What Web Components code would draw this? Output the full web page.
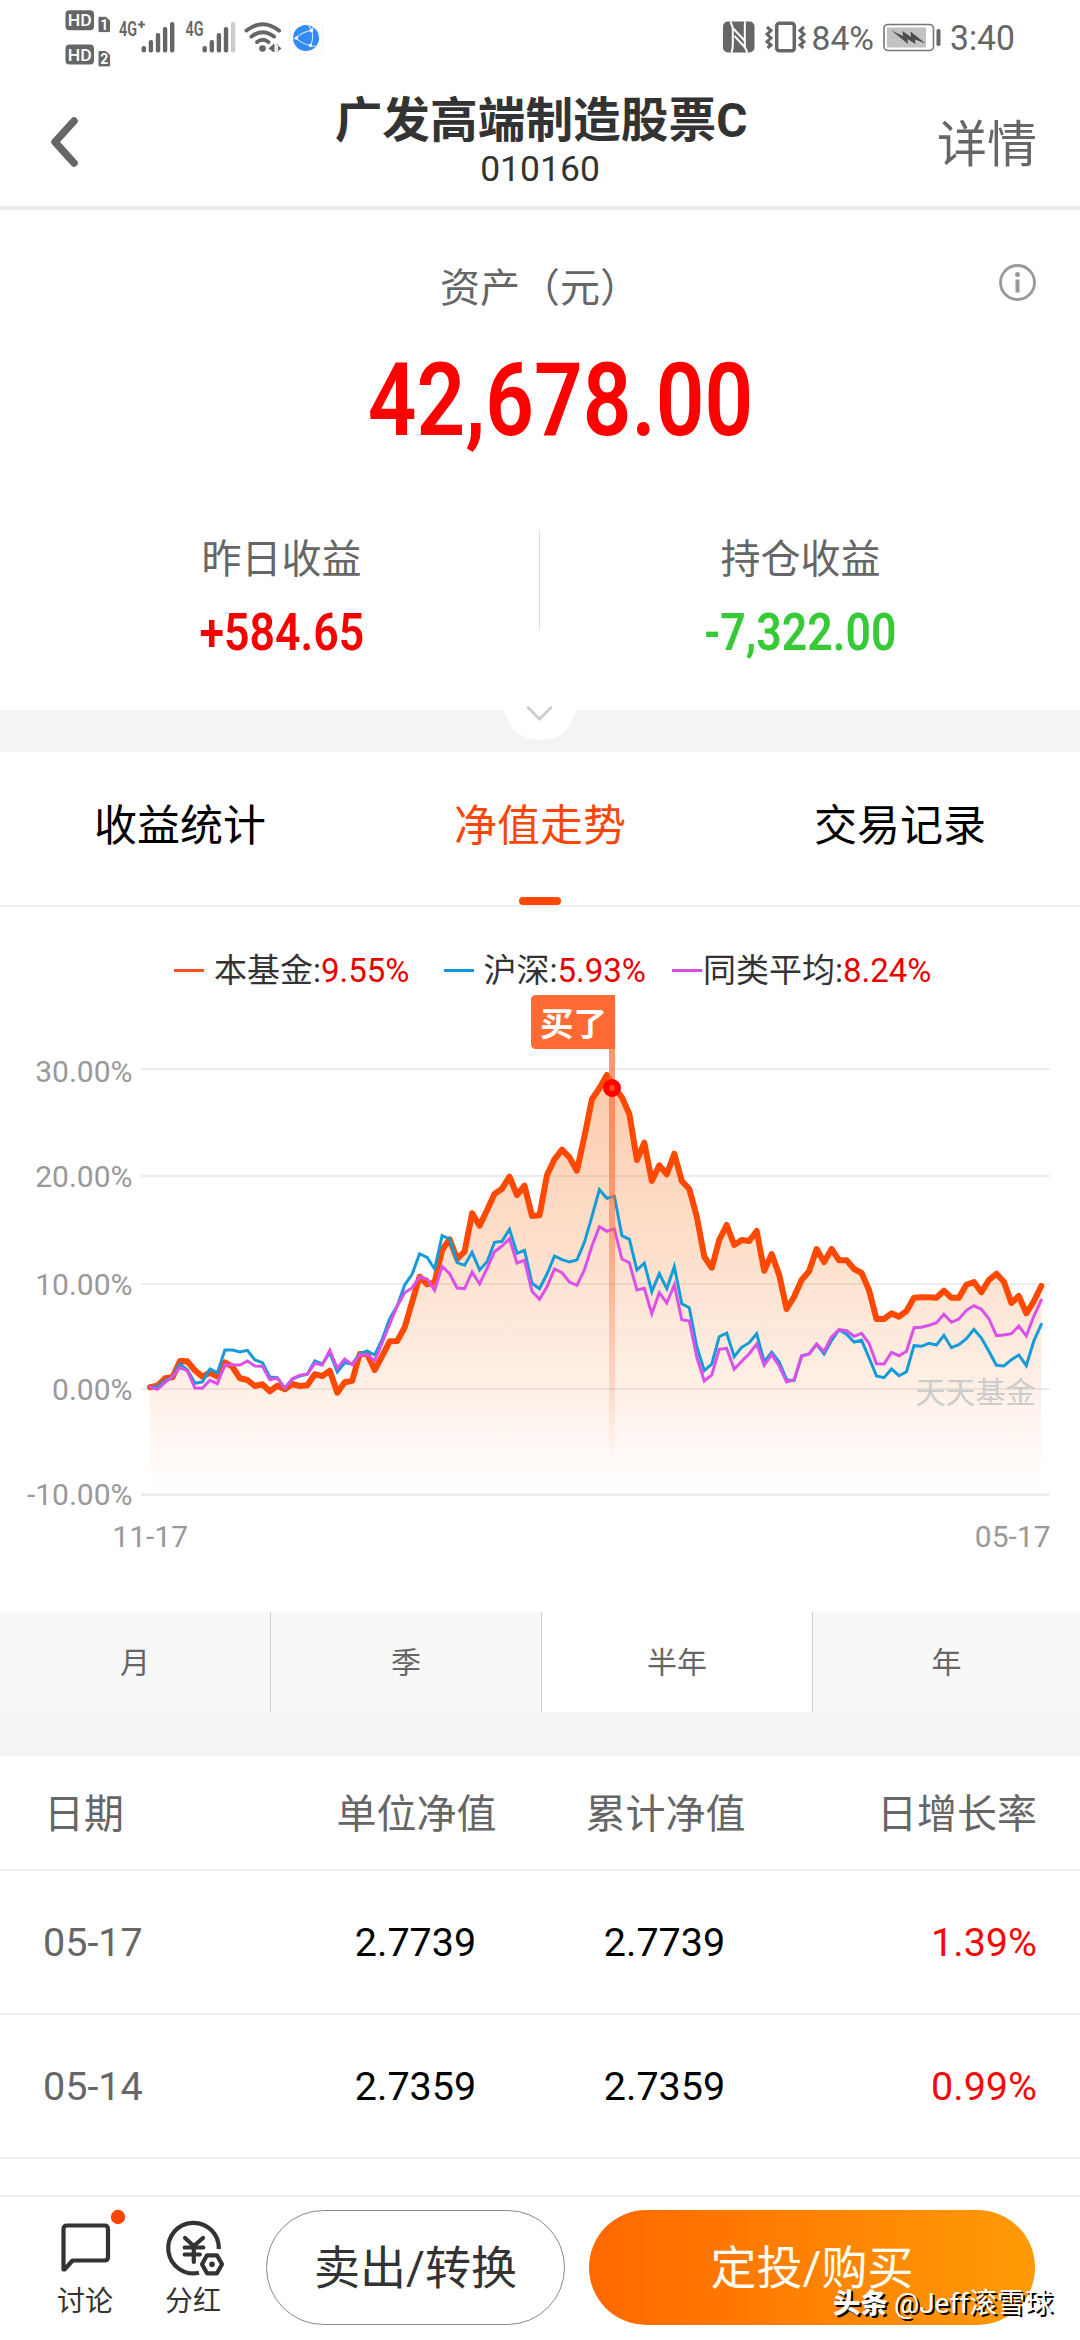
<!DOCTYPE html>
<html lang="zh-CN">
<head>
<meta charset="utf-8">
<title>广发高端制造股票C</title>
<style>
html,body{margin:0;padding:0;background:#fff}
body{width:1080px;height:2340px;overflow:hidden;font-family:Roboto,"Noto Sans CJK SC",sans-serif;color:#333}
fund-page{--grey:#666;--up:#f40808;--accent:#ff4a00}
</style>
</head>
<body>
<fund-page>
  <status-bar battery="84%" time="3:40"></status-bar>
  <page-header action="详情">广发高端制造股票C<span slot="code">010160</span></page-header>
  <asset-summary label="资产（元）" amount="42,678.00">
    <profit-cell label="昨日收益" shift="11" sx="0.85">+584.65</profit-cell>
    <profit-cell label="持仓收益" shift="-10" sx="0.85" down>-7,322.00</profit-cell>
  </asset-summary>
  <section-band h="42" toggle></section-band>
  <tab-bar>
    <tab-item>收益统计</tab-item>
    <tab-item active>净值走势</tab-item>
    <tab-item>交易记录</tab-item>
  </tab-bar>
  <chart-legend>
    <legend-item color="#f4511e" value="9.55%" gap="10" style="margin-left:174px">本基金:</legend-item>
    <legend-item color="#1296db" value="5.93%" gap="10" style="margin-left:34px">沪深:</legend-item>
    <legend-item color="#d94fe6" value="8.24%" gap="1" style="margin-left:26px">同类平均:</legend-item>
  </chart-legend>
  <trend-chart></trend-chart>
  <period-picker>
    <period-item>月</period-item>
    <period-item>季</period-item>
    <period-item active>半年</period-item>
    <period-item>年</period-item>
  </period-picker>
  <section-band h="44"></section-band>
  <nav-row head><span>日期</span><span slot="unit">单位净值</span><span slot="total">累计净值</span><span slot="rate">日增长率</span></nav-row>
  <nav-row><span>05-17</span><span slot="unit">2.7739</span><span slot="total">2.7739</span><span slot="rate">1.39%</span></nav-row>
  <nav-row><span>05-14</span><span slot="unit">2.7359</span><span slot="total">2.7359</span><span slot="rate">0.99%</span></nav-row>
  <action-bar></action-bar>
</fund-page>
<script>
const define=(name,render)=>customElements.define(name,class extends HTMLElement{
  connectedCallback(){
    if(this.shadowRoot)return;
    const root=this.attachShadow({mode:'open'});
    const t=document.createElement('template');
    t.innerHTML=render(this);
    root.append(t.content.cloneNode(true));
  }
});
const at=(el,n,d='')=>el.getAttribute(n)??d;

define('fund-page',()=>`<style>:host{display:flex;flex-direction:column;width:1080px;height:2340px;background:#fff}</style><slot></slot>`);

const bars=(x,weak)=>[46,40,33,27,22].map((y,i)=>`<rect x="${x+i*7.1}" y="${y}" width="4.4" height="${52.5-y}" rx="2" fill="${weak&&i===4?'#ccc':'#666'}"/>`).join('');
const hd=(y,n)=>`<rect x="65.5" y="${y}" width="28.5" height="20" rx="4" fill="#666"/>
<text x="79.8" y="${y+16}" text-anchor="middle" font-size="17" font-weight="500" fill="#fff" textLength="24" lengthAdjust="spacingAndGlyphs">HD</text>
<path d="M99 ${y+7}h7l3.5 3.5v10.8h-10.5z" fill="#666" stroke="#666" stroke-width="1" stroke-linejoin="round"/>
<text x="104.3" y="${y+19.5}" text-anchor="middle" font-size="14" font-weight="700" fill="#fff">${n}</text>`;
define('status-bar',el=>`<style>
:host{display:flex;height:80px;flex:none;color:#666}
svg{display:block;font-family:Roboto,sans-serif}
</style>
<svg width="1080" height="80" viewBox="0 0 1080 80">
${hd(10.3,1)}${hd(44.6,2)}
<g fill="#666" font-weight="600">
<text x="119" y="36" font-size="20.5" textLength="18" lengthAdjust="spacingAndGlyphs">4G</text>
<path d="M138 24.5h7M141.5 21v7" stroke="#666" stroke-width="2.2"/>
<text x="185.5" y="36" font-size="20.5" textLength="18" lengthAdjust="spacingAndGlyphs">4G</text>
</g>
${bars(141.6)}${bars(202.5,true)}
<g fill="none" stroke="#666" stroke-width="4" stroke-linecap="round">
<path d="M246.5 30.5q16-12.500 32.500 0"/><path d="M251.500 36.500q11-8.500 22.500 0"/><path d="M257 42q5.800-4.400 11.500 0"/></g>
<circle cx="262.500" cy="48.500" r="3.300" fill="#666"/>
<path d="M268.500 48.500l4.800-4.500v8zM281.500 48.500l-4.800-4.500v8zM273 44h1.500v8h-1.500zM276.500 44h1.500v8h-1.500z" fill="#666"/>
<rect x="289.500" y="21.500" width="33" height="33" rx="6" fill="#fff" stroke="#f3f3f3"/>
<circle cx="306" cy="38" r="13" fill="#348bf6"/>
<path d="M296 38q5.500-5.500 15.500-8M296 38q5 5.500 14.500 7.500M311.500 30q2.800 7-1 16M311.500 30l-3-5M293.500 39l2.500-1M310.500 46l7 .5M311.500 30l2-3" fill="none" stroke="#d5e8ff" stroke-width="1.100"/>
<circle cx="296.500" cy="38" r="1.700" fill="#fff"/><circle cx="311.500" cy="30.500" r="1.700" fill="#fff"/><circle cx="310.500" cy="45.500" r="1.700" fill="#fff"/>
<rect x="723" y="21.500" width="31.500" height="31" rx="5" fill="#666"/>
<path d="M730.500 21.500L732.800 28V45Q732.800 49 731.500 52.500M732.800 28L744.500 40.500M734.500 36L745.500 48M745 21.500Q744.800 24 744.800 29V47L747.300 52.500" fill="none" stroke="#fff" stroke-width="2"/>
<rect x="776.700" y="23.200" width="17.600" height="27.500" rx="2.500" fill="none" stroke="#666" stroke-width="3.500"/>
<path d="M767 27l4 3.500-4 3.800 4 3.700-4 3.700 4 3.300-3.500 3M804 27l-4 3.500 4 3.800-4 3.700 4 3.700-4 3.300 3.500 3" fill="none" stroke="#666" stroke-width="3"/>
<text x="811.500" y="50" font-size="34" fill="#666" textLength="62.500" lengthAdjust="spacingAndGlyphs">${at(el,'battery')}</text>
<rect x="884" y="24.500" width="49.500" height="26" rx="4" fill="#fff" stroke="#777" stroke-width="1.600"/>
<rect x="887" y="27.500" width="39" height="20" fill="#c2c2c2"/>
<path d="M891.500 30.500l11.500 5.500-.500-5 8.500 6-.500-5.500 15 12-10.500-4 .500 4.500-8-5 .5 5z" fill="#4d4d4d"/>
<rect x="936.500" y="29" width="4" height="17" rx="1.800" fill="#666"/>
<text x="950" y="50" font-size="35" fill="#666" textLength="65" lengthAdjust="spacingAndGlyphs">${at(el,'time')}</text>
</svg>`);

define('page-header',el=>`<style>
:host{display:flex;flex:none;height:126px;border-bottom:4px solid #ececec}
.l,.r{width:200px;display:flex}
.l svg{margin:35px 0 0 48px}
.m{flex:1;display:flex;flex-direction:column;align-items:center;padding-top:13px}
.t{font:700 47.7px/56px Roboto,"Noto Sans CJK SC",sans-serif;color:#333;white-space:nowrap;padding-left:2px}
.c{font-size:35.500px;line-height:40px}
.r{justify-content:flex-end;font-size:50px;line-height:60px;color:#666;padding:35px 43px 0 0;box-sizing:border-box}
</style>
<div class="l"><svg width="34" height="56" viewBox="0 0 34 56"><path d="M26 6L7 27 26 48" fill="none" stroke="#666" stroke-width="7.500" stroke-linecap="round" stroke-linejoin="round"/></svg></div>
<div class="m"><div class="t"><slot></slot></div><div class="c"><slot name="code"></slot></div></div>
<div class="r">${at(el,'action')}</div>`);

define('asset-summary',el=>`<style>
:host{display:flex;flex-direction:column;flex:none;height:500px}
.top{display:flex;height:138px;justify-content:center}
.side{width:200px;display:flex;justify-content:flex-end}
.side svg{margin:53px 43px 0 0}
.lab{flex:1;text-align:center;font-size:40px;line-height:40px;color:#666;padding-top:59px}
.amt{height:97px;padding-top:3px;display:flex;justify-content:center;font-size:101.600px;line-height:100px;font-weight:600;color:#f00;padding-left:41px;white-space:nowrap}
.amt span{display:inline-block;transform:scaleX(.84)}
.cols{display:flex;margin-top:82px;height:180px;background:linear-gradient(#ddd,#ddd) 539px 0/1px 100px no-repeat}
::slotted(profit-cell){flex:1}
</style>
<div class="top"><div class="side"></div><div class="lab">${at(el,'label')}</div>
<div class="side"><svg width="39" height="39" viewBox="0 0 39 39"><circle cx="19.500" cy="19.500" r="17" fill="none" stroke="#999" stroke-width="2.800"/><path d="M19.500 16.500v13" stroke="#999" stroke-width="4"/><circle cx="19.500" cy="11.500" r="2.500" fill="#999"/></svg></div></div>
<div class="amt"><span>${at(el,'amount')}</span></div>
<div class="cols"><slot></slot></div>`);

define('profit-cell',el=>{const s=+at(el,'shift',0);return `<style>
:host{display:flex;flex-direction:column;align-items:center;box-sizing:border-box;padding:10px ${s<0?-2*s:0}px 0 ${s>0?2*s:0}px}
.l{font-size:40px;line-height:40px;color:#666}
.v{font-size:52.500px;line-height:60px;margin-top:22px;font-weight:600;color:${el.hasAttribute('down')?'#36cb36':'#f60000'};transform:scaleX(${at(el,'sx',1)})}
</style><div class="l">${at(el,'label')}</div><div class="v"><slot></slot></div>`});

define('section-band',el=>`<style>
:host{display:block;flex:none;height:${at(el,'h')}px;background:#f4f4f4;position:relative}
svg{display:block;margin:0 auto;overflow:visible}
</style>${el.hasAttribute('toggle')?`<svg width="80" height="42" viewBox="0 0 80 42"><path d="M4.500 0C7 19 22 30 40 30S73 19 75.500 0Z" fill="#fff"/><path d="M28 -2.500L39.500 9 51 -2.500" fill="none" stroke="#ccc" stroke-width="2.800" stroke-linecap="round"/></svg>`:''}`);

define('tab-bar',()=>`<style>:host{display:flex;flex:none;height:153px;border-bottom:2px solid #f0f0f0}::slotted(*){flex:1}</style><slot></slot>`);
define('tab-item',el=>{const a=el.hasAttribute('active');return `<style>
:host{display:flex;flex-direction:column;align-items:center;justify-content:space-between;box-sizing:border-box;padding-top:44px;font-size:43px;line-height:60px;color:${a?'#f7480b':'#000'}}
i{display:block;width:42px;height:8px;border-radius:4px;background:${a?'#ff4500':'transparent'}}
</style><span><slot></slot></span><i></i>`});

define('chart-legend',()=>`<style>:host{display:flex;flex:none;height:84px;padding-top:44px;box-sizing:border-box}</style><slot></slot>`);
define('legend-item',el=>`<style>
:host{display:flex;align-items:center;height:40px;font-size:33px;line-height:40px;white-space:nowrap;color:#333}
i{width:30px;height:3px;margin:0 ${at(el,'gap')}px 2px 0;background:${at(el,'color')}}
b{font-weight:400;color:#e80000}
</style><i></i><span><slot></slot></span><b>${at(el,'value')}</b>`);

/* One sample per trading day; values are thirds of a pixel below y = 1050. */
const FUND=[1012,1007,985,982,933,934,961,980,968,980,937,950,985,990,1008,1003,1024,1007,1018,1002,1008,1006,973,978,962,1028,997,992,912,912,960,918,874,873,832,755,680,703,697,600,568,627,604,490,527,480,432,416,380,435,407,498,496,375,328,299,322,362,260,148,115,75,113,142,193,330,278,393,346,373,311,393,417,500,620,653,570,525,585,570,573,543,662,612,675,777,740,690,664,597,636,597,631,631,657,669,720,807,807,790,800,783,743,742,742,743,722,743,743,704,696,727,690,671,695,759,738,790,754,708];
const INDEX=[1012,1010,992,980,942,960,1000,996,957,968,900,900,906,901,930,938,981,983,1015,987,978,973,933,942,908,966,938,942,911,903,915,868,806,768,705,672,611,622,657,557,567,638,646,607,660,635,577,574,538,610,601,700,716,672,618,629,636,630,577,500,419,445,439,557,568,660,639,725,671,716,650,761,773,890,962,942,860,849,920,892,878,851,936,907,936,989,992,918,912,883,912,871,839,853,876,871,923,978,983,957,977,965,887,889,880,885,856,893,884,866,838,864,904,946,948,929,915,947,873,823];
const PEERS=[1012,1018,998,980,952,963,1014,1015,991,1001,944,945,945,933,948,949,989,984,1015,986,976,973,940,945,901,955,927,944,914,914,932,878,823,768,728,713,680,687,721,649,671,714,716,666,702,655,605,588,566,639,631,724,748,710,657,668,696,706,660,588,530,544,537,627,638,720,715,791,728,759,705,809,813,922,993,975,898,895,958,934,911,882,946,914,948,996,989,918,912,883,904,861,839,842,859,850,880,941,942,907,917,904,833,832,826,818,793,817,807,781,767,778,806,857,855,851,828,858,799,750];
const pts=a=>a.map((v,i)=>`${(150+i*7.49).toFixed(1)},${(1050+v/3).toFixed(1)}`).join(' ');
define('trend-chart',()=>`<style>:host{display:block;flex:none;height:621px}svg{display:block;font-family:Roboto,"Noto Sans CJK SC",sans-serif}</style>
<svg width="1080" height="621" viewBox="0 991 1080 621">
<defs>
<linearGradient id="area" gradientUnits="userSpaceOnUse" x1="0" y1="1075" x2="0" y2="1490"><stop offset="0" stop-color="#f87d2d" stop-opacity=".4"/><stop offset=".75" stop-color="#f87d2d" stop-opacity=".12"/><stop offset="1" stop-color="#f87d2d" stop-opacity="0"/></linearGradient>
<linearGradient id="pole" gradientUnits="userSpaceOnUse" x1="0" y1="995" x2="0" y2="1465"><stop offset="0" stop-color="#ff6a35" stop-opacity=".75"/><stop offset=".4" stop-color="#ff6a35" stop-opacity=".6"/><stop offset="1" stop-color="#ff6a35" stop-opacity="0"/></linearGradient>
</defs>
<path d="M141 1069H1050M141 1176H1050M141 1284H1050M141 1389H1050" stroke="#e6e6e6" stroke-width="1.700"/>
<path d="M141 1494.500H1050" stroke="#eee" stroke-width="3"/>
<g font-size="30" fill="#999" text-anchor="end">
<text x="132.500" y="1082">30.00%</text><text x="132.500" y="1187">20.00%</text><text x="132.500" y="1295">10.00%</text><text x="132.500" y="1400">0.00%</text><text x="132.500" y="1505">-10.00%</text>
<text x="1050.500" y="1547">05-17</text><text x="188" y="1547">11-17</text></g>
<polygon points="150,1490 ${pts(FUND)} 1041.300,1490" fill="url(#area)"/>
<text x="915.500" y="1403" font-size="30" fill="#ccc">天天基金</text>
<g fill="none" stroke-linejoin="round" stroke-linecap="round">
<polyline points="${pts(FUND)}" stroke="#ff4800" stroke-width="6"/>
<polyline points="${pts(INDEX)}" stroke="#149bd9" stroke-width="3" stroke-linejoin="miter"/>
<polyline points="${pts(PEERS)}" stroke="#dc50ea" stroke-width="3" stroke-linejoin="miter"/></g>
<rect x="609" y="1045" width="6" height="420" fill="url(#pole)"/>
<circle cx="612" cy="1088" r="9" fill="#f00"/><circle cx="612" cy="1088" r="3" fill="#ff4a1c"/>
<path d="M536 995H615V1049H536Q531 1049 531 1044V1000Q531 995 536 995Z" fill="#ff6a35"/>
<text x="573.500" y="1036" text-anchor="middle" font-size="33.500" font-weight="700" fill="#fff">买了</text>
</svg>`);

define('period-picker',()=>`<style>:host{display:grid;grid-template-columns:271px 271px 271px 1fr;flex:none;height:100px}</style><slot></slot>`);
define('period-item',el=>`<style>
:host{display:flex;align-items:center;justify-content:center;box-sizing:border-box;padding-top:2px;font-size:30px;line-height:40px;color:#666;background:${el.hasAttribute('active')?'#fff':'#f8f8f8'};border-right:1px solid #ccc}
:host(:last-child){border-right:0}
</style><slot></slot>`);

define('nav-row',el=>{const h=el.hasAttribute('head');return `<style>
:host{display:grid;flex:none;grid-template-columns:248px 249px 249px 1fr;align-items:center;box-sizing:border-box;height:${h?115:144}px;padding:${h?5:2}px 43px 0 ${h?44:43}px;border-bottom:2px solid #efefef;font-size:${h?40:39.5}px;line-height:50px}
.d{color:#666}.u{text-align:center;color:${h?'#666':'#000'}}.r{text-align:right;color:${h?'#666':'var(--up)'}}
</style><div class="d"><slot></slot></div><div class="u"><slot name="unit"></slot></div><div class="u"><slot name="total"></slot></div><div class="r"><slot name="rate"></slot></div>`});

define('action-bar',()=>`<style>
:host{display:flex;flex:none;margin-top:auto;height:145px;box-sizing:border-box;border-top:2px solid #f0f0f0;position:relative}
.i{display:flex;flex-direction:column;align-items:center;width:108px;font-size:28px;line-height:36px;color:#333}
.i svg{display:block;margin-top:8px;margin-bottom:3px;height:76px}
.a{margin-left:31px;}
.b{box-sizing:border-box;height:115px;margin-top:13px;border-radius:58px;display:flex;align-items:center;justify-content:center;font-size:46px;line-height:60px}
.sell{width:299px;margin-left:19px;border:1.500px solid #888;color:#333}
.buy{width:446px;margin-left:24px;background:linear-gradient(90deg,#ff6800,#ff9b06);color:#fffdf2}
.w{position:absolute;left:833px;top:89px;font-size:28px;line-height:36px;color:#fff;text-shadow:2px 2px 0 #000;white-space:nowrap;display:flex;gap:6px}
.w b{font-weight:900;font-size:27.500px}
</style>
<div class="i a"><svg width="108" height="76" viewBox="0 0 108 76"><path d="M32.500 64.500V24Q32.500 20.500 36 20.500H73.500Q77 20.500 77 24V52Q77 55.500 73.500 55.500H41.500L33.500 64.500Z" fill="none" stroke="#333" stroke-width="4.200" stroke-linejoin="round"/><circle cx="87" cy="12" r="7.200" fill="#ff4500"/></svg>讨论</div>
<div class="i"><svg width="108" height="76" viewBox="0 0 108 76"><g fill="none" stroke="#333" stroke-width="4.200"><path d="M79.800 44A25.300 25.300 0 1 0 60 67.800"/><path d="M46 33L54.800 41 64 33M54.800 41V57" stroke-linecap="round"/><path d="M45.500 42.500H64.500M45.500 49.500H61" stroke-linecap="round" stroke-width="3.800"/><path d="M68 50.300h10l5 9-5 9h-10l-5-9z" stroke-linejoin="round"/></g><circle cx="73" cy="59.300" r="2.800" fill="#333"/></svg>分红</div>
<div class="b sell">卖出/转换</div>
<div class="b buy">定投/购买</div>
<div class="w"><b>头条</b><span>@Jeff滚雪球</span></div>`);
</script>
</body>
</html>
